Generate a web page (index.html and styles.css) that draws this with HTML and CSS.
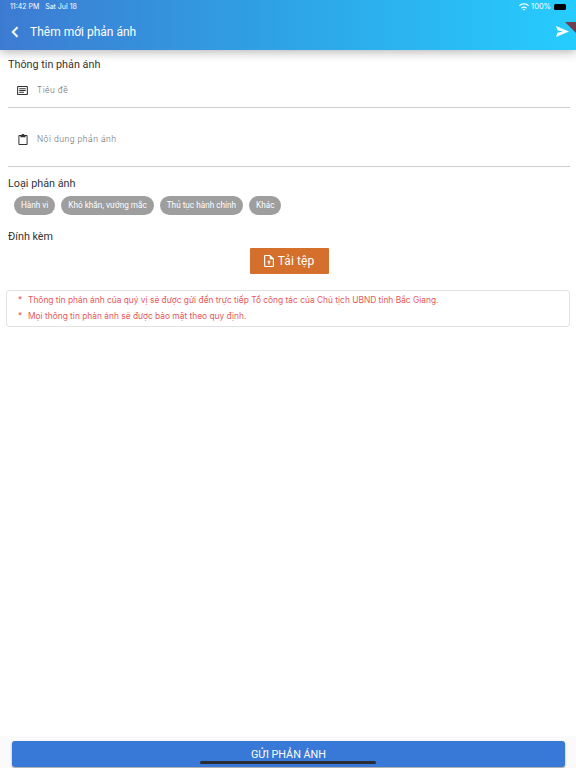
FILE: index.html
```html
<!DOCTYPE html>
<html lang="vi">
<head>
<meta charset="utf-8">
<title>Thêm mới phản ánh</title>
<link rel="stylesheet" href="styles.css">
</head>
<body>
<div class="page">
  <header class="appbar">
    <div class="status">
      <span class="status-time">11:42 PM&nbsp;&nbsp;&nbsp;Sat Jul 18</span>
      <span class="status-right">
        <svg class="wifi" width="10" height="8" viewBox="0 0 24 18"><path fill="#fff" d="M12 3c4 0 7.500 1.500 10.500 4.200l1.500-2C20.700 2 16.500 0 12 0S3.300 2 0 5.200l1.500 2C4.500 4.500 8 3 12 3zm0 5c-2.700 0-5 1-7 2.800l1.800 2.100C8.200 11.700 10 11 12 11s3.800.7 5.200 1.900l1.800-2.100C17 9 14.700 8 12 8zm0 5.500c-1.200 0-2.300.4-3.100 1.100L12 18l3.100-3.400c-.8-.7-1.900-1.100-3.100-1.100z"/></svg>
        <span>100%</span>
        <span class="battery"></span>
      </span>
    </div>
    <div class="bar">
      <svg class="back" width="10" height="12" viewBox="0 0 10 12"><path d="M7.500 1.200 2.800 6l4.700 4.800" fill="none" stroke="#fff" stroke-width="2"/></svg>
      <span class="title">Thêm mới phản ánh</span>
      <svg class="send" width="13" height="11" viewBox="0 0 13 11"><path fill="#fff" d="M0 0l13 5.500L0 11l1.500-4.300L7 5.500 1.500 4.300z"/></svg>
    </div>
    <span class="ribbon"></span>
  </header>

  <main class="form">
    <h2 class="label label-first">Thông tin phản ánh</h2>
    <div class="field field-title">
      <svg class="field-icon" width="11" height="9" viewBox="0 0 12 10"><path fill="#333" d="M1.200 0h9.600C11.500 0 12 .5 12 1.200v7.600c0 .7-.5 1.200-1.200 1.200H1.200C.5 10 0 9.500 0 8.800V1.200C0 .5.500 0 1.200 0zm0 1.200v7.600h9.600V1.200zM2.400 2.600h7.200v1.100H2.400zm0 1.900h7.200v1.100H2.400zm0 1.900h5.200v1.100H2.400z"/></svg>
      <span class="placeholder">Tiêu đề</span>
    </div>
    <div class="field field-body">
      <svg class="field-icon" width="10" height="11" viewBox="0 0 10 12"><path fill="#333" d="M1.100 1.200h2.200C3.500.5 4.200 0 5 0s1.500.5 1.700 1.200h2.200c.6 0 1.100.5 1.100 1.100v8.600c0 .6-.5 1.100-1.100 1.100H1.100C.5 12 0 11.500 0 10.900V2.300c0-.6.500-1.100 1.100-1.100zm0 1.100v8.600h7.800V2.300H7.800v1.200H2.200V2.300z"/></svg>
      <span class="placeholder">Nội dung phản ánh</span>
    </div>

    <h2 class="label label-type">Loại phản ánh</h2>
    <div class="chips">
      <span class="chip">Hành vi</span>
      <span class="chip">Khó khăn, vướng mắc</span>
      <span class="chip">Thủ tục hành chính</span>
      <span class="chip">Khác</span>
    </div>

    <h2 class="label label-attach">Đính kèm</h2>
    <div class="upload-row">
      <button class="upload" type="button">
        <svg width="10" height="12" viewBox="0 0 10 12"><path fill="#fff" d="M1.200 0h5L10 3.800v7c0 .7-.5 1.200-1.200 1.200H1.200C.5 12 0 11.500 0 10.800V1.200C0 .5.500 0 1.200 0zm0 1.100v9.800h7.600V4.300H5.700V1.100zM5 5.200l2 2.100H5.600v2.200H4.400V7.300H3z"/></svg>
        <span>Tải tệp</span>
      </button>
    </div>

    <div class="notice">
      <p class="notice-line"><span class="star">*</span>Thông tin phản ánh của quý vị sẽ được gửi đến trực tiếp Tổ công tác của Chủ tịch UBND tỉnh Bắc Giang.</p>
      <p class="notice-line"><span class="star">*</span>Mọi thông tin phản ánh sẽ được bảo mật theo quy định.</p>
    </div>
  </main>

  <footer class="footer">
    <button class="submit" type="button">GỬI PHẢN ÁNH</button>
    <span class="home"></span>
  </footer>
</div>
</body>
</html>
```
FILE: styles.css
```css
* { box-sizing: border-box; }
html, body { margin: 0; padding: 0; }
body { background: #fff; font-family: Roboto, "Liberation Sans", sans-serif; color: #333; }
.page { width: 576px; height: 768px; display: flex; flex-direction: column; overflow: hidden; }

.appbar {
  position: relative; height: 50px; flex: none; color: #fff;
  background: linear-gradient(90deg, #3d7bd2 0%, #2ea4e6 50%, #26ccff 100%);
  box-shadow: 0 2px 10px rgba(0,0,0,.3);
  z-index: 1;
}
.status { height: 13px; padding: 0 10px 0 10px; display: flex; justify-content: space-between; align-items: center; font-size: 7px; font-family: Inter, sans-serif; }
.status-right { display: flex; align-items: center; gap: 2px; font-size: 7.500px; }
.battery { width: 12px; height: 6px; border-radius: 1.500px; background: #000; display: block; margin-left: 1px; }
.bar { height: 37px; display: flex; align-items: center; padding: 0 7px 0 10px; }
.back { flex: none; margin-right: 10px; }
.title { flex: 1; font-size: 12px; font-weight: 400; }
.ribbon { position: absolute; right: 0; top: 22px; width: 0; height: 0; border-top: 11px solid #6e4050; border-left: 11px solid transparent; }

.form { flex: 1; padding: 0 6px 0 8px; display: flex; flex-direction: column; }
.label { margin: 0; font-size: 10.800px; line-height: 14px; font-weight: 400; color: #333; }
.label-first { margin-top: 8px; }
.field { display: flex; align-items: flex-start; padding-left: 9px; border-bottom: 1px solid #ccc; }
.field-title { height: 36px; padding-top: 12px; }
.field-body { height: 59px; padding-top: 24px; }
.field-icon { flex: none; margin-right: 9px; }
.field-title .field-icon { margin-top: 2px; margin-right: 9px; }
.field-body .field-icon { margin-top: 2px; margin-left: 1px; margin-right: 9px; }
.placeholder { font-size: 8.600px; line-height: 12px; font-weight: 300; color: #666; letter-spacing: .5px; }
.field-body .placeholder { margin-top: 1px; }
.label-type { margin-top: 10px; }
.chips { display: flex; gap: 6px; padding-left: 6px; margin-top: 5px; }
.chip { height: 19px; padding: 0 7px; border-radius: 10px; background: #9e9e9e; color: #fff; font-size: 8.200px; line-height: 19px; }
.label-attach { margin-top: 15px; }
.upload-row { display: flex; justify-content: center; margin-top: 4px; }
.upload { width: 79px; height: 26px; border: 0; border-radius: 1px; background: #d56f2c; color: #fff; display: flex; align-items: center; justify-content: center; gap: 4px; font-family: Roboto, sans-serif; font-size: 12px; letter-spacing: .1px; padding: 0; }
.notice { margin: 16px 0 0 -2px; height: 37px; border: 1px solid #e2e2e2; border-radius: 3px; padding: 2px 0 0 11px; }
.notice-line { margin: 0; height: 16px; font-size: 8.400px; line-height: 15px; color: #e8575a; font-family: Inter, sans-serif; }
.star { display: inline-block; width: 10px; }

.footer { position: relative; flex: none; height: 32px; background: #fafafa; padding: 5px 11px 0 12px; }
.submit { display: block; width: 100%; height: 26px; border: 0; border-radius: 3px; background: #3878d6; color: #fff; font-family: Roboto, sans-serif; font-size: 10.800px; font-weight: 400; padding: 0; box-shadow: 0 1px 2px rgba(0,0,0,.4); }
.home { position: absolute; left: 200px; bottom: 4px; width: 176px; height: 3px; border-radius: 2px; background: #2b2b33; }
```
